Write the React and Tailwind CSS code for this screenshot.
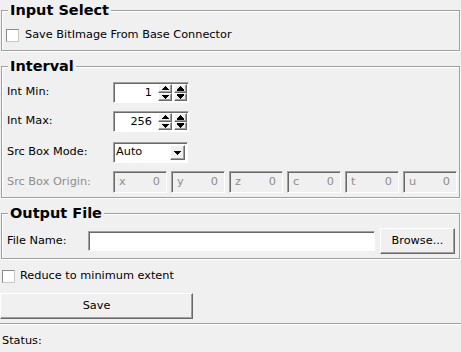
import React from "react";

const SUNKEN =
  "border border-t-[#a0a0a0] border-l-[#a0a0a0] border-r-white border-b-white shadow-[inset_1px_1px_0_#696969]";
const RAISED =
  "border border-t-white border-l-white border-r-[#696969] border-b-[#696969] shadow-[inset_-1px_-1px_0_#a0a0a0]";

function Arrow({ down, bar, color = "#000" }) {
  const rows = [
    [3, 1],
    [2, 3],
    [1, 5],
    [0, 7],
  ];
  const h = bar ? 5 : 4;
  return (
    <svg width="7" height={h} viewBox={`0 0 7 ${h}`} shapeRendering="crispEdges">
      {rows.map(([x, w], i) => {
        const yy = bar ? (down ? i + 1 : i) : i;
        const y = down ? (bar ? h - 1 - i : h - 1 - i) : yy;
        return <rect key={i} x={x} y={down ? y : yy} width={w} height="1" fill={color} />;
      })}
      {bar && <rect x="0" y={down ? 0 : 4} width="7" height="1" fill={color} />}
    </svg>
  );
}

function Half({ down, bar }) {
  return (
    <div className={RAISED + " flex-1 flex items-center justify-center bg-[#f0f0f0]"}>
      <Arrow down={down} bar={bar} />
    </div>
  );
}

function Spin({ value }) {
  return (
    <div className={SUNKEN + " w-[76px] h-[21px] bg-white flex"}>
      <div className="flex-1 text-right pr-[6px] leading-[19px]">{value}</div>
      <div className="flex gap-[2px] pr-[1px] py-[1px]">
        <div className="flex flex-col w-[14px]">
          <Half />
          <Half down />
        </div>
        <div className="flex flex-col w-[13px]">
          <Half bar />
          <Half down bar />
        </div>
      </div>
    </div>
  );
}

function Check() {
  return (
    <div className="w-[13px] h-[13px] bg-white border border-t-[#8a8a8a] border-l-[#8a8a8a] border-r-[#c8c8c8] border-b-[#c8c8c8]" />
  );
}

function Frame({ title, children, className }) {
  return (
    <fieldset
      className={
        "ml-[1px] w-[459px] border border-[#a0a0a0] shadow-[inset_1px_1px_0_#fff,1px_1px_0_#fff] " +
        className
      }
    >
      <legend className="ml-[6px] px-[2px] bg-[#f0f0f0] font-bold text-[14.5px] leading-[20px] text-black">
        {title}
      </legend>
      {children}
    </fieldset>
  );
}

function OriginBox({ letter }) {
  return (
    <div className={SUNKEN + " h-[22px] bg-[#f0f0f0] flex items-center justify-between pl-[5px] pr-[6px] text-[#8d8d8d]"}>
      <span>{letter}</span>
      <span>0</span>
    </div>
  );
}

export default function App() {
  return (
    <div className="w-[461px] h-[352px] bg-[#f0f0f0] font-['DejaVu_Sans',sans-serif] text-[11.3px] text-black overflow-hidden">
      <Frame title="Input Select" className="pt-[5px] pb-[5px]">
        <div className="h-[20px] flex items-center pl-[4px] gap-[6px]">
          <Check />
          <span>Save BitImage From Base Connector</span>
        </div>
      </Frame>

      <Frame title="Interval" className="mt-[5px] pt-[6px] pb-[4px]">
        <div className="pl-[5px] flex flex-col">
          <div className="h-[21px] flex items-center">
            <span className="w-[106px]">Int Min:</span>
            <Spin value="1" />
          </div>
          <div className="h-[21px] mt-[8px] flex items-center">
            <span className="w-[106px]">Int Max:</span>
            <Spin value="256" />
          </div>
          <div className="h-[21px] mt-[10px] flex items-center">
            <span className="w-[106px]">Src Box Mode:</span>
            <div className={SUNKEN + " w-[75px] h-[21px] bg-white flex items-center"}>
              <span className="flex-1 pl-[2px]">Auto</span>
              <div className={RAISED + " w-[15px] h-[15px] mr-[2px] flex items-center justify-center bg-[#f0f0f0]"}>
                <svg width="7" height="4" shapeRendering="crispEdges">
                  <rect x="0" y="0" width="7" height="1" fill="#000" />
                  <rect x="1" y="1" width="5" height="1" fill="#000" />
                  <rect x="2" y="2" width="3" height="1" fill="#000" />
                  <rect x="3" y="3" width="1" height="1" fill="#000" />
                </svg>
              </div>
            </div>
          </div>
          <div className="h-[22px] mt-[8px] flex items-center">
            <span className="w-[106px] shrink-0 text-[#8d8d8d]">Src Box Origin:</span>
            <div className="grid grid-cols-6 gap-[4px] w-[344px]">
              <OriginBox letter="x" />
              <OriginBox letter="y" />
              <OriginBox letter="z" />
              <OriginBox letter="c" />
              <OriginBox letter="t" />
              <OriginBox letter="u" />
            </div>
          </div>
        </div>
      </Frame>

      <Frame title="Output File" className="mt-[5px] pt-[5px] pb-[4px]">
        <div className="h-[26px] flex items-center pl-[5px] pr-[4px]">
          <span className="w-[81px]">File Name:</span>
          <div className={SUNKEN + " w-[287px] h-[20px] bg-white"} />
          <div className={RAISED + " ml-[5px] w-[75px] h-[26px] flex items-center justify-center"}>
            Browse...
          </div>
        </div>
      </Frame>

      <div className="mt-[7px] h-[20px] flex items-center pl-[2px] gap-[5px]">
        <Check />
        <span>Reduce to minimum extent</span>
      </div>

      <div className={RAISED + " mt-[7px] w-[193px] h-[26px] flex items-center justify-center"}>Save</div>

      <div className="mt-[4px] h-[2px] border-t border-[#a0a0a0] border-b border-b-white" />

      <div className="mt-[8px] h-[16px] flex items-center pl-[2px]">Status:</div>
    </div>
  );
}
